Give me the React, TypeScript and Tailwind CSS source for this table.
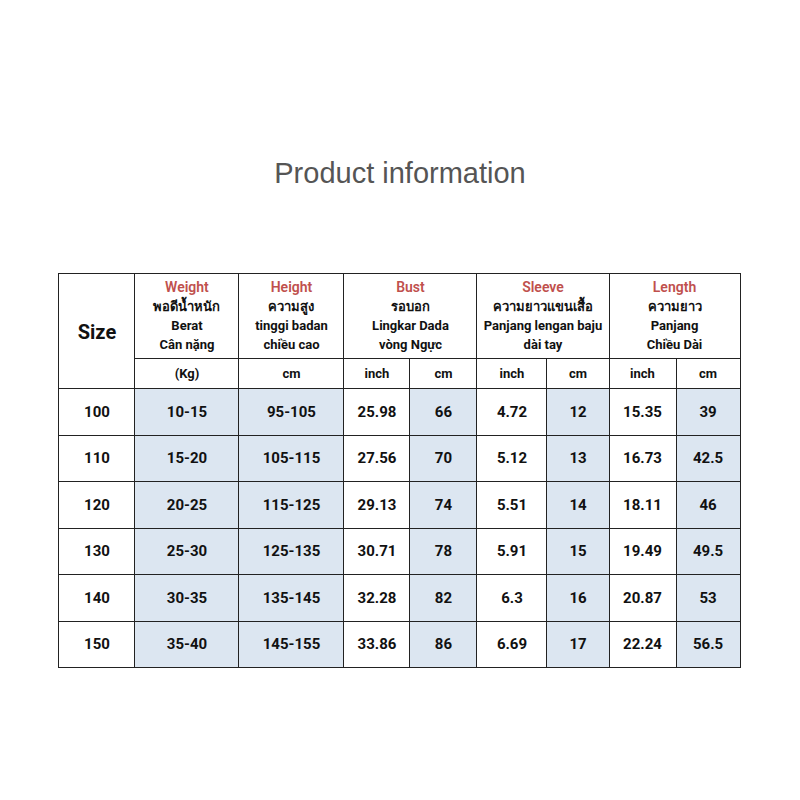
import React from "react";

type Row = string[];

const rows: Row[] = [
    ["100", "10-15", "95-105", "25.98", "66", "4.72", "12", "15.35", "39"],
    ["110", "15-20", "105-115", "27.56", "70", "5.12", "13", "16.73", "42.5"],
    ["120", "20-25", "115-125", "29.13", "74", "5.51", "14", "18.11", "46"],
    ["130", "25-30", "125-135", "30.71", "78", "5.91", "15", "19.49", "49.5"],
    ["140", "30-35", "135-145", "32.28", "82", "6.3", "16", "20.87", "53"],
    ["150", "35-40", "145-155", "33.86", "86", "6.69", "17", "22.24", "56.5"],
];

// columns that carry the blue-grey fill
const shaded = [false, true, true, false, true, false, true, false, true];
const widths = ["w-[76px]", "w-[104px]", "w-[105px]", "w-[66px]", "w-[67px]", "w-[70px]", "w-[62px]", "w-[67px]", "w-[64px]"];

const cell = "border border-[#222] text-center align-middle p-0";

function HeadCell({ title, lines, span }: { title: string; lines: string[]; span?: number }) {
    return (
        <th colSpan={span} className={`${cell} font-bold leading-[19px]`}>
            <div className="text-[#c0504d] text-[14px] font-semibold">{title}</div>
            {lines.map((l, i) => (
                <div key={i} className="text-[13px] text-[#111]">
                    {l}
                </div>
            ))}
        </th>
    );
}

export default function App() {
    return (
        <div className="w-[800px] h-[800px] bg-white flex flex-col items-center" style={{ fontFamily: "Roboto, 'Noto Sans', sans-serif" }}>
            <h1
                className="mt-[156px] text-[29px] leading-[34px] text-[#555] font-normal"
                style={{ fontFamily: "'Liberation Sans', Arial, sans-serif" }}
            >
                Product information
            </h1>
            <table className="mt-[83px] ml-[-1px] border-collapse text-[#111] table-fixed w-[681px]">
                <colgroup>
                    {widths.map((w, i) => (
                        <col key={i} className={w} />
                    ))}
                </colgroup>
                <thead>
                    <tr className="h-[85px]">
                        <th rowSpan={2} className={`${cell} text-[20px] font-bold pt-[2px]`}>
                            Size
                        </th>
                        <HeadCell title="Weight" lines={["พอดีน้ำหนัก", "Berat", "Cân nặng"]} />
                        <HeadCell title="Height" lines={["ความสูง", "tinggi badan", "chiều cao"]} />
                        <HeadCell title="Bust" span={2} lines={["รอบอก", "Lingkar Dada", "vòng Ngực"]} />
                        <HeadCell title="Sleeve" span={2} lines={["ความยาวแขนเสื้อ", "Panjang lengan baju", "dài tay"]} />
                        <HeadCell title="Length" span={2} lines={["ความยาว", "Panjang", "Chiều Dài"]} />
                    </tr>
                    <tr className="h-[30px] text-[13px] font-bold">
                        {["(Kg)", "cm", "inch", "cm", "inch", "cm", "inch", "cm"].map((u, i) => (
                            <th key={i} className={cell}>
                                {u}
                            </th>
                        ))}
                    </tr>
                </thead>
                <tbody>
                    {rows.map((r, ri) => (
                        <tr key={ri} className="h-[46.5px] text-[15px] font-bold">
                            {r.map((v, ci) => (
                                <td key={ci} className={`${cell} ${shaded[ci] ? "bg-[#dce6f1]" : "bg-white"}`}>
                                    {v}
                                </td>
                            ))}
                        </tr>
                    ))}
                </tbody>
            </table>
        </div>
    );
}
